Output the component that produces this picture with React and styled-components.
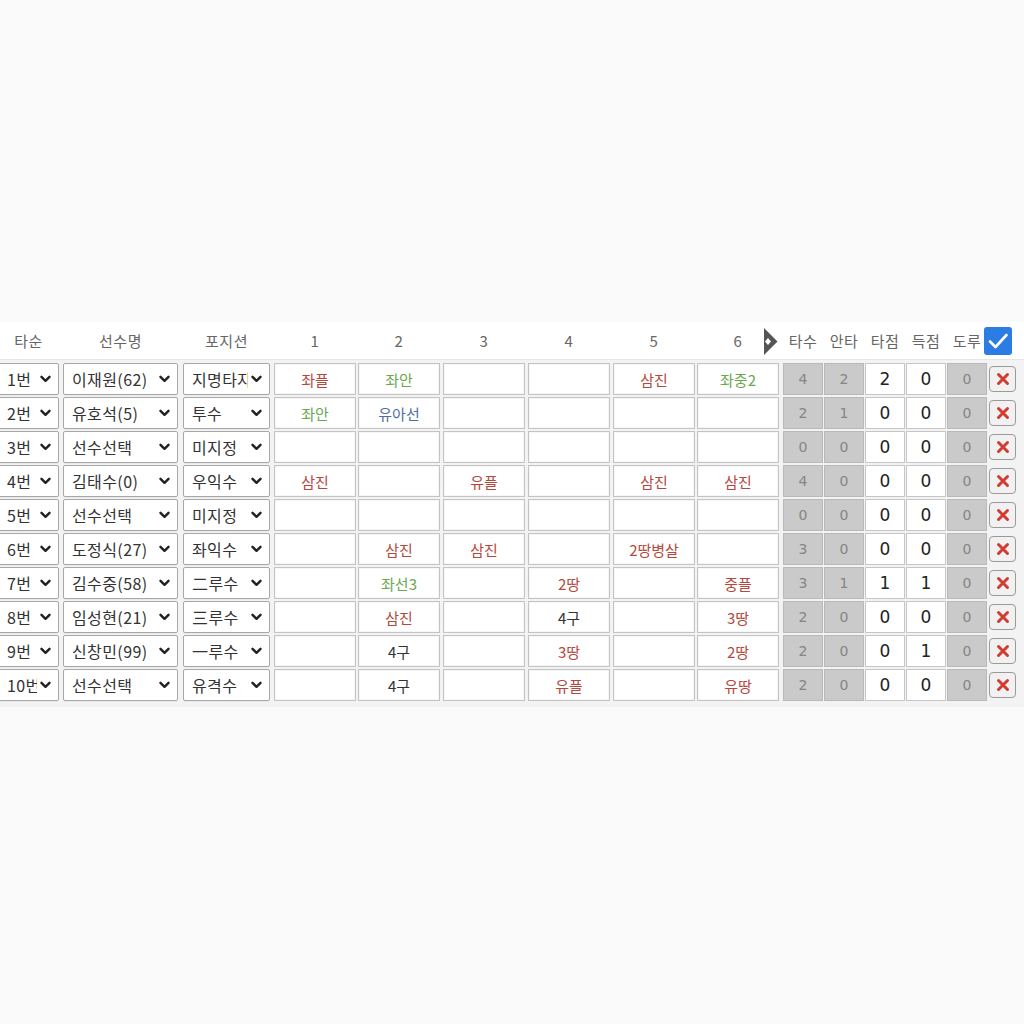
import React from "react";
import styled, { createGlobalStyle } from "styled-components";

const Global = createGlobalStyle`
  html, body { margin: 0; padding: 0; background: #fafafa; }
  body { font-family: "Noto Sans CJK KR", "Noto Sans", sans-serif; overflow: hidden; }
  * { box-sizing: border-box; }
`;

const Page = styled.div`
  width: 1024px;
  height: 1024px;
  padding-top: 322px;
  overflow: hidden;
`;

const Panel = styled.div`
  width: 1030px;
  margin-left: -2px;
  background: #ffffff;
`;

const HeaderRow = styled.div`
  display: flex;
  height: 38px;
  align-items: stretch;
  background: #ffffff;
  border-bottom: 1px solid #e6e6e6;
`;

const Body = styled.div`
  display: flex;
  flex-direction: column;
  gap: 2px;
  padding: 3px 0 6px;
  background: #f3f3f3;
`;

const Row = styled.div`
  display: flex;
  height: 32px;
  align-items: stretch;
`;

const Cell = styled.div`
  flex: none;
  width: ${(p) => p.$w}px;
  margin-left: ${(p) => p.$ml}px;
  position: relative;
`;

const HeadLabel = styled(Cell)`
  display: flex;
  align-items: center;
  justify-content: center;
  color: #666;
  font-size: 15px;
  letter-spacing: 0.5px;
`;

const SelectBox = styled.div`
  height: 100%;
  display: flex;
  align-items: center;
  padding-left: 8px;
  padding-right: 7px;
  border: 1px solid #a8a8a8;
  border-radius: 2px;
  background: #fff;
  color: #333;
  font-size: 16px;
  box-shadow: 0 1px 0 rgba(0,0,0,0.04);
`;

const SelectText = styled.span`
  flex: 1;
  overflow: hidden;
  white-space: nowrap;
  letter-spacing: 0.4px;
  margin-right: 3px;
`;

const Chevron = () => (
  <svg width="11" height="8" viewBox="0 0 11 8" style={{ flex: "none" }}>
    <path d="M1.5 1.8 L5.5 5.8 L9.5 1.8" fill="none" stroke="#222" strokeWidth="2.4" strokeLinecap="round" strokeLinejoin="round" />
  </svg>
);

const Inning = styled.div`
  height: 100%;
  display: flex;
  align-items: center;
  justify-content: center;
  background: #fff;
  border: 1px solid #c4c4c4;
  box-shadow: inset 0 0 0 1px #f6f6f6;
  font-size: 15px;
  color: ${(p) => p.$color};
`;

const Stat = styled.div`
  height: 100%;
  display: flex;
  align-items: center;
  justify-content: center;
  border: 1px solid ${(p) => (p.$gray ? "#b9b9b9" : "#c6c6c6")};
  background: ${(p) => (p.$gray ? "#cacaca" : "#ffffff")};
  color: ${(p) => (p.$gray ? "#858585" : "#222")};
  font-family: "DejaVu Sans", sans-serif;
  font-size: ${(p) => (p.$gray ? "14px" : "17px")};
`;

const DelButton = styled.div`
  margin-top: 3px;
  height: 26px;
  display: flex;
  align-items: center;
  justify-content: center;
  border: 1.5px solid #9a9a9a;
  border-radius: 4px;
  background: #f1f1f1;
`;

const CheckBox = styled.div`
  position: absolute;
  left: -5px;
  top: 5px;
  width: 28px;
  height: 28px;
  border-radius: 3px;
  background: #2b7de4;
  display: flex;
  align-items: center;
  justify-content: center;
`;

const ArrowIcon = styled.div`
  position: absolute;
  right: 1px;
  top: 6px;
  width: 14px;
  height: 27px;
  display: flex;
`;

const colsSel = [
  { w: 61, ml: 0 },
  { w: 115, ml: 4 },
  { w: 87, ml: 5 },
];
const colsInn = [
  { w: 82, ml: 4 },
  { w: 82, ml: 2 },
  { w: 82, ml: 3 },
  { w: 82, ml: 3 },
  { w: 82, ml: 3 },
  { w: 82, ml: 2 },
];
const colsStat = [
  { w: 40, ml: 4 },
  { w: 40, ml: 1 },
  { w: 40, ml: 1 },
  { w: 40, ml: 1 },
  { w: 40, ml: 1 },
];
const colDel = { w: 27, ml: 2 };

const R = "#b5483c";
const G = "#6aa84f";
const B = "#4f6f9f";
const K = "#333";

const rows = [
  ["1번", "이재원(62)", "지명타자", [["좌플", R], ["좌안", G], null, null, ["삼진", R], ["좌중2", G]], [4, 2, 2, 0, 0]],
  ["2번", "유호석(5)", "투수", [["좌안", G], ["유아선", B], null, null, null, null], [2, 1, 0, 0, 0]],
  ["3번", "선수선택", "미지정", [null, null, null, null, null, null], [0, 0, 0, 0, 0]],
  ["4번", "김태수(0)", "우익수", [["삼진", R], null, ["유플", R], null, ["삼진", R], ["삼진", R]], [4, 0, 0, 0, 0]],
  ["5번", "선수선택", "미지정", [null, null, null, null, null, null], [0, 0, 0, 0, 0]],
  ["6번", "도정식(27)", "좌익수", [null, ["삼진", R], ["삼진", R], null, ["2땅병살", R], null], [3, 0, 0, 0, 0]],
  ["7번", "김수중(58)", "二루수", [null, ["좌선3", G], null, ["2땅", R], null, ["중플", R]], [3, 1, 1, 1, 0]],
  ["8번", "임성현(21)", "三루수", [null, ["삼진", R], null, ["4구", K], null, ["3땅", R]], [2, 0, 0, 0, 0]],
  ["9번", "신창민(99)", "一루수", [null, ["4구", K], null, ["3땅", R], null, ["2땅", R]], [2, 0, 0, 1, 0]],
  ["10번", "선수선택", "유격수", [null, ["4구", K], null, ["유플", R], null, ["유땅", R]], [2, 0, 0, 0, 0]],
];

const heads = ["타순", "선수명", "포지션"];
const statHeads = ["타수", "안타", "타점", "득점", "도루"];

export default function App() {
  return (
    <Page>
      <Global />
      <Panel>
        <HeaderRow>
          {colsSel.map((c, i) => (
            <HeadLabel key={i} $w={c.w} $ml={c.ml}>{heads[i]}</HeadLabel>
          ))}
          {colsInn.map((c, i) => (
            <HeadLabel key={i} $w={c.w} $ml={c.ml}>
              {i + 1}
              {i === 5 && (
                <ArrowIcon>
                  <svg width="14" height="27" viewBox="0 0 14 27">
                    <polygon points="0,0 0,27 13.5,13.5" fill="#555" />
                    <polygon points="1,13.5 4,10 7,13.5 4,17" fill="#fff" />
                  </svg>
                </ArrowIcon>
              )}
            </HeadLabel>
          ))}
          {colsStat.map((c, i) => (
            <HeadLabel key={i} $w={c.w} $ml={c.ml}>{statHeads[i]}</HeadLabel>
          ))}
          <HeadLabel $w={colDel.w} $ml={colDel.ml}>
            <CheckBox>
              <svg width="22" height="18" viewBox="0 0 22 18">
                <path d="M3 9.5 L8.5 15 L19.5 3" fill="none" stroke="#fff" strokeWidth="2.6" strokeLinecap="round" strokeLinejoin="round" />
              </svg>
            </CheckBox>
          </HeadLabel>
        </HeaderRow>
        <Body>
          {rows.map((r, ri) => (
            <Row key={ri}>
              {colsSel.map((c, i) => (
                <Cell key={i} $w={c.w} $ml={c.ml}>
                  <SelectBox>
                    <SelectText>{r[i]}</SelectText>
                    <Chevron />
                  </SelectBox>
                </Cell>
              ))}
              {colsInn.map((c, i) => {
                const v = r[3][i];
                return (
                  <Cell key={i} $w={c.w} $ml={c.ml}>
                    <Inning $color={v ? v[1] : K}>{v ? v[0] : ""}</Inning>
                  </Cell>
                );
              })}
              {colsStat.map((c, i) => (
                <Cell key={i} $w={c.w} $ml={c.ml}>
                  <Stat $gray={i === 0 || i === 1 || i === 4}>{r[4][i]}</Stat>
                </Cell>
              ))}
              <Cell $w={colDel.w} $ml={colDel.ml}>
                <DelButton>
                  <svg width="14" height="14" viewBox="0 0 14 14">
                    <path d="M2.5 2.5 L11.5 11.5 M11.5 2.5 L2.5 11.5" stroke="#d23b30" strokeWidth="3" strokeLinecap="round" />
                  </svg>
                </DelButton>
              </Cell>
            </Row>
          ))}
        </Body>
      </Panel>
    </Page>
  );
}
